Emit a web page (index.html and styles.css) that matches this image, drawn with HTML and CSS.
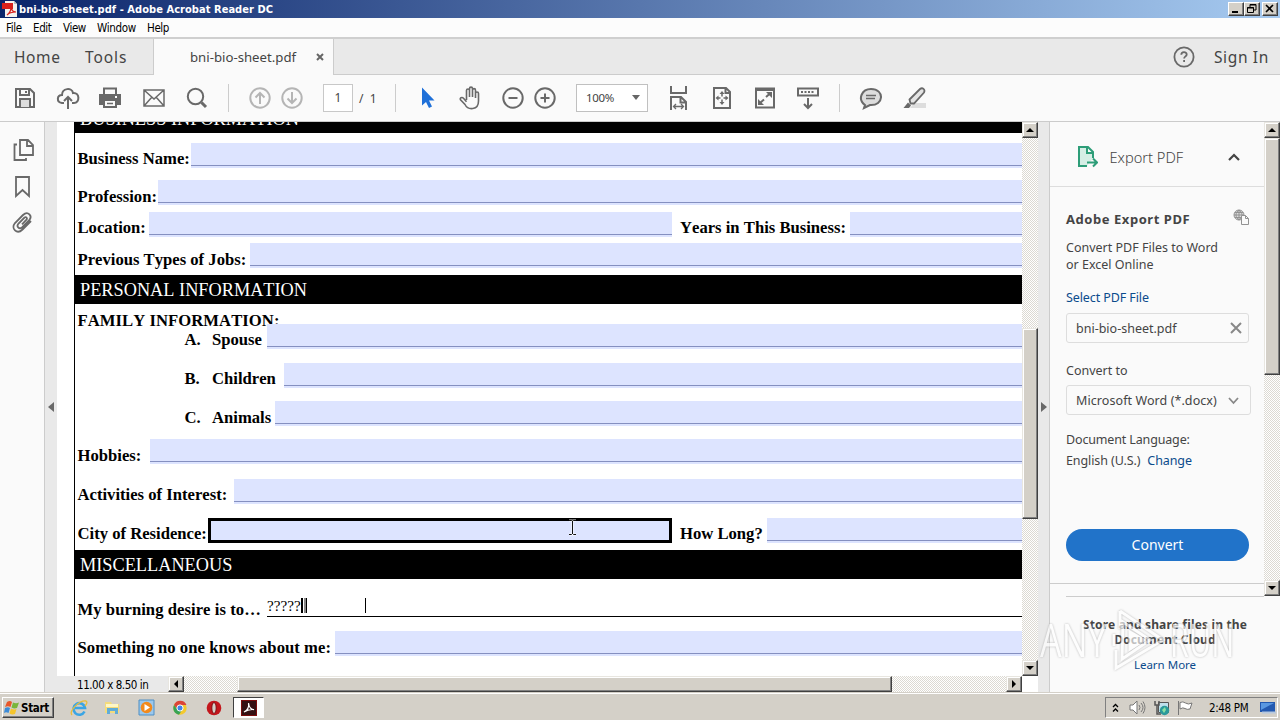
FILE: index.html
```html
<!DOCTYPE html>
<html lang="en">
<head>
<meta charset="utf-8">
<title>bni-bio-sheet.pdf - Adobe Acrobat Reader DC</title>
<link rel="stylesheet" href="styles.css">
</head>
<body>
<div class="screen">
  <header class="titlebar">
    <svg class="app-icon" width="16" height="16" viewBox="0 0 16 16"><path d="M3 0h9l3 3v13H3z" fill="#f4f1ee"/><path d="M12 0v3h3z" fill="#bbb"/><path d="M0 2h11v6H0z" fill="#d8201c"/><path d="M5 14c3-2 4-5 4-8 1 4 2 5 5 5-4 0-7 1-9 3z" fill="none" stroke="#d8201c" stroke-width="1.2"/></svg>
    <h1 class="title">bni-bio-sheet.pdf - Adobe Acrobat Reader DC</h1>
    <div class="winbtns">
      <span class="winbtn"><svg width="14" height="12"><path d="M3 9h6" stroke="#000" stroke-width="2"/></svg></span>
      <span class="winbtn"><svg width="14" height="12"><path d="M5 4V1.5h6V7H9M5 2h6M2.500 4.500h6v5h-6zM2 5h7" fill="none" stroke="#000"/></svg></span>
      <span class="winbtn close"><svg width="14" height="12"><path d="M3 2l7 7M10 2l-7 7" stroke="#000" stroke-width="1.600"/></svg></span>
    </div>
  </header>
  <nav class="menubar"><span class="m-file">File</span><span class="m-edit">Edit</span><span class="m-view">View</span><span class="m-window">Window</span><span class="m-help">Help</span></nav>
  <div class="tabs">
    <div class="tab-group"><span class="home">Home</span><span class="tools">Tools</span></div>
    <div class="tab-active"><span class="tab-name">bni-bio-sheet.pdf</span><svg width="8" height="8"><path d="M1 1l6 6M7 1L1 7" stroke="#666" stroke-width="2"/></svg></div>
    <div class="account">
      <svg width="22" height="22" viewBox="0 0 22 22" fill="none" stroke="#696969" stroke-width="1.800"><circle cx="11" cy="11" r="9.600"/><path d="M8.300 8.800c0-3.600 5.400-3.400 5.400-.4 0 2-2.600 2-2.600 4.200M11.100 14v2"/></svg>
      <span class="signin">Sign In</span>
    </div>
  </div>
  <div class="toolbar">
    <svg class="ic" viewBox="0 0 24 24"><path d="M3 3h14l4 4v14H3z"/><path d="M7 3v6h9V3M13 5v2"/><path d="M7 21v-8h10v8" fill="#ddd"/></svg>
    <svg class="ic" viewBox="0 0 24 24"><path d="M8 17H6c-6-1-5-8 0-8 0-7 10-8 11-2 7-1 7 10 1 10h-2M12 23V11M8 15l4-4 4 4"/></svg>
    <svg class="ic" viewBox="0 0 24 24"><path d="M2 9h20v9H2z" fill="#696969"/><path d="M6 8V2.500h12V8"/><path d="M6 14h12v7H6z" fill="#fafafa"/><path d="M9 17.500h6M3 11h2" stroke-width="1.500"/><path d="M17 11h2" stroke="#fff"/></svg>
    <svg class="ic thin" viewBox="0 0 24 24"><path d="M2 4h20v16H2zM2 4l10 9L22 4M2 20l8-9M22 20l-8-9"/></svg>
    <svg class="ic" viewBox="0 0 24 24"><circle cx="10.500" cy="10.500" r="7.700"/><path d="M16.500 16.500l4.500 4.500" stroke-width="3"/></svg>
    <i class="sep"></i>
    <svg class="ic pale" viewBox="0 0 24 24"><circle cx="12" cy="12" r="9.700"/><path d="M12 18V7M7.500 11.500L12 7l4.500 4.500"/></svg>
    <svg class="ic pale" viewBox="0 0 24 24"><circle cx="12" cy="12" r="9.700"/><path d="M12 6v11M7.500 12.500L12 17l4.500-4.500"/></svg>
    <span class="page-box">1</span><span class="page-total">/&nbsp; 1</span>
    <i class="sep"></i>
    <svg class="ic" viewBox="0 0 24 24"><path d="M7 1.500v18l4-3.500 3 6 3-1.500-3-6H19.500z" fill="#1f70d8" stroke="none"/></svg>
    <svg class="ic hand" viewBox="0 0 24 24"><path d="M8.500 14V4.500c0-2 3-2 3 0V11 2.800c0-2.200 3-2.200 3 0V11 4.300c0-2.200 3-2.200 3 0V12 7.500c0-2 3-2 3 0V15c0 9.500-10.500 9.500-13.500 3.500L2.500 13.800c-1-2 1.500-3 3-1.500l3 3.500"/></svg>
    <svg class="ic" viewBox="0 0 24 24"><circle cx="12" cy="12" r="9.700"/><path d="M7.500 12h9"/></svg>
    <svg class="ic" viewBox="0 0 24 24"><circle cx="12" cy="12" r="9.700"/><path d="M7.500 12h9M12 7.500v9"/></svg>
    <span class="zoom-box">100%<svg width="8" height="5"><path d="M0 0h8L4 5z" fill="#666"/></svg></span>
    <svg class="ic" viewBox="0 0 24 24"><path d="M4 0v7h15V0M4 24V11h10l5 5v8M13.500 11v5.500H19" /><path d="M7 20.500h9M9 18l-2.500 2.500L9 23M14 18l2.500 2.500L14 23" stroke-width="1.300"/></svg>
    <svg class="ic" viewBox="0 0 24 24"><path d="M4 2h12l4 4v16H4zM15.500 2v5H20"/><path d="M12 7v3.500M12 13.500V17M7 12h3.500M13.500 12H17" stroke-width="1.500"/><path d="M12 5l2.500 3h-5zM12 19l2.500-3h-5zM5.500 12l3-2.500v5zM18.500 12l-3-2.500v5z" fill="#696969" stroke="none"/></svg>
    <svg class="ic" viewBox="0 0 24 24"><path d="M3 2.500h18v19H3zM3 4h18"/><path d="M13 11l4-3.500M7 17l4-3.500"/><path d="M13 6h6v6zM5 13v6h6z" fill="#696969" stroke="none"/></svg>
    <svg class="ic" viewBox="0 0 24 24"><path d="M2 2.500h20v7H2z"/><path d="M5 6h14" stroke-dasharray="2 1.500"/><path d="M12 12v10M8 18l4 4 4-4"/></svg>
    <i class="sep"></i>
    <svg class="ic" viewBox="0 0 24 24"><path d="M6 19C-2 13 3 3 12 3c14 0 13 17-1 16l-6 3z" fill="#ddd"/><path d="M7 9.500h10M7 12.500h9" stroke-width="1.300"/></svg>
    <svg class="ic" viewBox="0 0 24 24"><path d="M12 17h12v5H8z" fill="#ddd" stroke="none"/><path d="M7.500 13.500L18 3c2.500-2 5.500.5 4 3.500L12 17.500H8.500z" fill="#e4e4e4" stroke-width="1.800"/><path d="M6 16.500l3 3-2 2.500H1.500z" fill="#696969" stroke="none"/></svg>
  </div>

  <main class="main">
    <aside class="rail">
      <svg width="24" height="24" viewBox="0 0 24 24"><path d="M9 2h8l5 5v10H9zM16 2v6h6M6 6.500H3.500V22H15v-2"/></svg>
      <svg width="24" height="24" viewBox="0 0 24 24"><path d="M5 3h13v19l-6.500-6L5 22z"/></svg>
      <svg width="24" height="24" viewBox="0 0 24 24"><path d="M20 11l-8.500 8.500c-5.500 5.500-12-1-7.500-6.500L12 5c5-4.500 10 1 6 5.500l-7 7c-3 2-6-1-3.500-4l6-6c2-1 3 1 2 2.200L11 14.300"/></svg>
    </aside>
    <div class="split left"><i class="tri-left"></i></div>
    <section class="viewer">
      <div class="doc">
        <div class="page">
          <div class="band first">BUSINESS INFORMATION</div>
          <div class="row r-name"><b>Business Name:</b><i class="field"></i></div>
          <div class="row down r-prof"><b>Profession:</b><i class="field"></i></div>
          <div class="row r-loc"><b>Location:</b><i class="field"></i><b class="second">Years in This Business:</b><i class="field"></i></div>
          <div class="row down r-prev"><b>Previous Types of Jobs:</b><i class="field"></i></div>
          <div class="band personal">PERSONAL INFORMATION</div>
          <div class="family">FAMILY INFORMATION:</div>
          <div class="row r-spouse"><b class="letter">A.</b><b class="item">Spouse</b><i class="field"></i></div>
          <div class="row r-child"><b class="letter">B.</b><b class="item">Children</b><i class="field"></i></div>
          <div class="row down r-anim"><b class="letter">C.</b><b class="item">Animals</b><i class="field"></i></div>
          <div class="row down r-hob"><b>Hobbies:</b><i class="field"></i></div>
          <div class="row r-act"><b>Activities of Interest:</b><i class="field"></i></div>
          <div class="row r-city"><b>City of Residence:</b><i class="field focus"></i><b class="second">How Long?</b><i class="field"></i></div>
          <div class="band misc">MISCELLANEOUS</div>
          <div class="row r-desire"><b>My burning desire is to…</b><span class="answer">?????<i class="bar thick"></i><i class="bar"></i><i class="bar far"></i></span></div>
          <div class="row down r-some"><b>Something no one knows about me:</b><i class="field"></i></div>
        </div>
      </div>
      <div class="vscroll doc-v">
        <span class="sbtn"><i class="up"></i></span><span class="thumb"></span><span class="sbtn end"><i class="down-arrow"></i></span>
      </div>
      <div class="statusbar">
        <span class="dims">11.00 x 8.50 in</span>
        <div class="hscroll"><span class="sbtn"><i class="lf"></i></span><span class="thumb"></span><span class="sbtn end"><i class="rt"></i></span></div>
      </div>
      <svg class="cursor" width="9" height="17" viewBox="0 0 9 17"><path d="M1 1.500h2.500l1 1 1-1H8M1 15.500h2.500l1-1 1 1H8M4.500 2v13" fill="none" stroke="#fff" stroke-opacity=".6" stroke-width="2.500"/><path d="M1 1.500h2.500l1 1 1-1H8M1 15.500h2.500l1-1 1 1H8M4.500 2v13" fill="none" stroke="#111"/></svg>
    </section>
    <div class="split right"><i class="tri-right"></i></div>
    <aside class="panel">
      <div class="panel-top">
        <div class="panel-body">
          <div class="export-head">
            <svg width="22" height="24" viewBox="0 0 22 24" fill="none" stroke="#2d9d78" stroke-width="2"><path d="M11 21H3V2h9l5 5v6M11 2v6h6" fill="#d5eee5"/><path d="M11 17.500h9M17 13.500l4 4-4 4"/></svg>
            <span>Export PDF</span>
            <svg width="12" height="8" class="chev"><path d="M1 7l5-5 5 5" fill="none" stroke="#444" stroke-width="2.200"/></svg>
          </div>
          <div class="export-body">
            <div class="heading"><b>Adobe Export PDF</b><svg width="17" height="17" viewBox="0 0 17 17" fill="none" stroke="#929292"><circle cx="6" cy="6" r="5" fill="#ddd"/><path d="M1 6h10M6 1v10M2 3.500h8M2 8.500h8M6 1C2 4 2 8 6 11M6 1c4 3 4 7 0 10"/><path d="M8.500 6.500h4l3 3v6h-7zM12.500 6.500v3h3" fill="#fafafa"/></svg></div>
            <p class="desc">Convert PDF Files to Word<br>or Excel Online</p>
            <a class="select">Select PDF File</a>
            <div class="box file"><span>bni-bio-sheet.pdf</span><svg width="12" height="12"><path d="M1 1l10 10M11 1L1 11" stroke="#888" stroke-width="2"/></svg></div>
            <div class="lbl-convert">Convert to</div>
            <div class="box format"><span>Microsoft Word (*.docx)</span><svg width="11" height="8"><path d="M1 1l4.500 5L10 1" fill="none" stroke="#888" stroke-width="1.800"/></svg></div>
            <div class="lbl-lang">Document Language:</div>
            <div class="lang"><span>English (U.S.)</span><a>Change</a></div>
            <div class="convert">Convert</div>
          </div>
        </div>
        <div class="vscroll panel-v"><span class="sbtn"><i class="up"></i></span><span class="thumb"></span><span class="sbtn end"><i class="down-arrow"></i></span></div>
      </div>
      <div class="cloud"><b class="c1">Store and share files in the</b><b class="c2">Document Cloud</b><a>Learn More</a></div>
      <div class="watermark"><span>ANY</span><svg width="60" height="64" viewBox="0 0 60 64" fill="none" stroke="#fff" stroke-width="3"><path d="M14 3v18M14 3l43 29L10 60V42M8 26v12M17 14l27 18-28 19z"/><path d="M24 24l14 8-14 9z" fill="#fff"/></svg><span>RUN</span></div>
    </aside>
  </main>

  <footer class="taskbar">
    <div class="start"><svg width="16" height="15" viewBox="0 0 16 15"><path d="M3 2q3-2 5 0L6.500 7Q4 5.500 1 7z" fill="#e8572b"/><path d="M9 2.500q3 1.500 6 0L13 8q-3 1-5.500-.5z" fill="#79b63a"/><path d="M1 8q3-1.500 5 0l-1.500 5Q2 11.500 0 13z" fill="#3b8bd8"/><path d="M7 8.500q3 1.500 5.500.5L11 14q-3 1-5.500-.5z" fill="#f5c52c"/></svg><b>Start</b></div>
    <svg class="t-ie" width="18" height="18" viewBox="0 0 18 18" fill="none"><path d="M14.500 12.500A5.800 5.800 0 1 1 15 9H5" stroke="#3aa5e4" stroke-width="2.600"/><path d="M2 16C-2 12 10 1 16 2c2 1 0 4-1 5" stroke="#e8bd3a" stroke-width="1.300"/></svg>
    <svg class="t-folder" width="17" height="17" viewBox="0 0 17 17"><path d="M1 3h6l1 2h7v9H1z" fill="#f3db7c"/><path d="M2 5h12v3H2z" fill="#fff7c5"/><path d="M3 15V9h11v6h-3v-3H6v3z" fill="#61acd8"/></svg>
    <svg class="t-media" width="17" height="17" viewBox="0 0 17 17"><path d="M1 1h15v15H1z" fill="#9bc8ed" stroke="#4e8fc4"/><circle cx="8.500" cy="8.500" r="5.800" fill="#f28a1d"/><path d="M6.500 5v7l5.500-3.500z" fill="#fff"/></svg>
    <svg class="t-chrome" width="16" height="16" viewBox="0 0 16 16"><circle cx="8" cy="8" r="6.700" fill="#f4c92e"/><path d="M2 5a6.700 6.700 0 0 1 12.500 0H8L5 9z" fill="#dc4437"/><path d="M2 5a6.700 6.700 0 0 0 5 9.700L10 10 5 9z" fill="#37a354"/><circle cx="8" cy="8" r="3.100" fill="#4384e8" stroke="#fff"/></svg>
    <svg class="t-opera" width="16" height="16" viewBox="0 0 16 16"><circle cx="8" cy="8" r="7.300" fill="#c3161c"/><ellipse cx="8" cy="8" rx="2.200" ry="5.500" fill="#d4d0c8" stroke="#7f0c10"/></svg>
    <div class="task-active"><svg width="16" height="16" viewBox="0 0 16 16"><path d="M0 0h16v16H0z" fill="#7b0c0c"/><path d="M1 1h14v14H1z" fill="#351012"/><path d="M3 12c4-2 5-6 4.500-9C8 7 10 10 13 9.500 9 9 6 10 3 12z" fill="none" stroke="#fff" stroke-width="1.200"/></svg></div>
    <div class="tray">
      <svg class="t-chev" width="7" height="10"><path d="M1 4l2.500-2.500L6 4M1 8.500L3.500 6 6 8.500" fill="none" stroke="#000" stroke-width="1.300"/></svg>
      <svg class="t-sound" width="17" height="15" viewBox="0 0 17 15" fill="none" stroke="#777"><path d="M1 5h3l4-4v13l-4-4H1z" fill="#fff"/><path d="M10 5q2 2.500 0 5M12 3q4 4.500 0 9M14 1.500q4 6 0 12"/></svg>
      <svg class="t-net" width="16" height="16" viewBox="0 0 16 16"><path d="M4.500 2.500h10v10h-10z" fill="#bfe0ec" stroke="#555"/><path d="M1 1v4h4V1M3 5v9h4" fill="none" stroke="#555" stroke-width="1.500"/><circle cx="10.500" cy="10.500" r="4.700" fill="#2b9a9b"/><path d="M8 10l3-3 1 3-2 3z" fill="#8be0a2"/></svg>
      <svg class="t-flag" width="16" height="16" viewBox="0 0 16 16"><path d="M1.500 1v14M3 2.500q3-1.500 5.500.5T15 3l-2 6q-3 1-5-.5t-5 .5z" fill="#fff" stroke="#777"/></svg>
      <span class="clock">2:48 PM</span>
      <svg class="t-desk" width="16" height="13" viewBox="0 0 16 13"><path d="M0 1h15v10H0z" fill="#2359b0"/><path d="M1 2h13L1 9z" fill="#5a98e1"/><path d="M2 11.500h14" stroke="#b6c8df" stroke-width="2"/></svg>
    </div>
  </footer>
</div>
</body>
</html>
```
FILE: styles.css
```css
* { box-sizing: border-box; }
body { margin: 0; background: #fafafa; font-family: "Noto Sans", sans-serif; color: #444; }
svg { display: block; flex: none; }
p, h1 { margin: 0; }
i { font-style: normal; }
span, b, a { white-space: nowrap; }
.screen { width: 1280px; height: 720px; display: grid; grid-template-rows: 18px 21px 36px 47px 570px 28px; overflow: hidden; }

.titlebar { display: flex; align-items: center; background: linear-gradient(90deg, #0a246a, #a6caf0); padding: 0 2px; }
.title { font: bold 11px/17px "DejaVu Sans Condensed", "DejaVu Sans", sans-serif; font-stretch: condensed; color: #fff; margin-left: 1px; letter-spacing: .05px; white-space: nowrap; }
.winbtns { display: flex; margin-left: auto; }
.winbtn { width: 16px; height: 14px; background: #d4d0c8; border: 1px solid; border-color: #fff #404040 #404040 #fff; box-shadow: inset -1px -1px #808080; }
.winbtn.close { margin-left: 2px; }

.menubar { display: flex; background: #fcfcfc; border-bottom: 2px solid #cfcfcf; padding-left: 6px; font: 11.500px/20px "DejaVu Sans Condensed", "DejaVu Sans", sans-serif; font-stretch: condensed; color: #000; letter-spacing: -.4px; }
.m-file { width: 27px; } .m-edit { width: 30px; } .m-view { width: 34px; } .m-window { width: 50px; letter-spacing: -.3px; }

.tabs { display: flex; background: #fafafa; }
.tab-group { width: 154px; background: #e9e9e9; border-right: 1px solid #ccc; border-bottom: 1px solid #ccc; padding-left: 14px; display: flex; font-size: 15.500px; line-height: 36px; letter-spacing: .6px; }
.home { width: 71px; }
.tools { letter-spacing: .9px; }
.tab-active { width: 179px; padding-left: 36px; display: flex; align-items: center; gap: 20px; font-size: 13.200px; }
.account { flex: 1; background: #e9e9e9; border-left: 1px solid #ccc; border-bottom: 1px solid #ccc; display: flex; align-items: center; justify-content: flex-end; padding-right: 11px; gap: 19px; font-size: 15.500px; letter-spacing: .65px; }

.toolbar { display: grid; grid-template-columns: 43px 42px 44px 43px 43px 20px 32px 43px 36px 36px 20px 43px 43px 32px 43px 91px 43px 43px 43px 43px 20px 43px 24px; padding-left: 13px; align-items: center; border-bottom: 1px solid #cbcbcb; font-size: 12px; }
.ic { width: 24px; height: 24px; fill: none; stroke: #696969; stroke-width: 2; }
.ic.thin { stroke-width: 1.500; }
.ic.hand { stroke-width: 1.600; }
.ic.pale { stroke: #b5b5b5; }
.sep { width: 1px; height: 28px; background: #ccc; }
.page-box { width: 30px; height: 28px; border: 1px solid #c8c8c8; background: #fff; line-height: 26px; text-align: center; }
.zoom-box { width: 72px; height: 28px; border: 1px solid #c0c0c0; background: #fff; display: flex; align-items: center; justify-content: space-between; padding: 0 7px 1px 9px; font-size: 11.500px; letter-spacing: -.3px; }

.main { display: grid; grid-template-columns: 44px 13px 981px 12px 230px; min-height: 0; }
.rail { background: #fafafa; padding: 16px 0 0 11px; display: flex; flex-direction: column; gap: 12px; }
.rail svg { fill: none; stroke: #696969; stroke-width: 1.800; }
.split { background: #e9e9e9; display: flex; align-items: center; }
.split.left { border-left: 1px solid #ccc; padding-left: 3px; }
.split.right { border-right: 1px solid #ccc; padding-left: 3px; }
.tri-left { border: 5px solid transparent; border-left: 0; border-right: 6px solid #696969; }
.tri-right { border: 5px solid transparent; border-right: 0; border-left: 6px solid #696969; }

.viewer { display: grid; grid-template: 554px 16px / 965px 16px; position: relative; background: #fff; }
.doc { overflow: hidden; padding-left: 17px; font-family: "Liberation Serif", serif; color: #000; font-kerning: none; }
.page { height: 554px; border-left: 1px solid #000; overflow: hidden; }
.band { height: 29px; background: #000; color: #fff; padding-left: 5px; font-size: 18.300px; line-height: 30px; white-space: nowrap; }
.band.first { height: 11px; display: flex; align-items: flex-end; overflow: hidden; line-height: 28px; }
.row { display: flex; height: 24px; font-size: 16.650px; line-height: 31px; padding-left: 2.500px; }
.row > b { flex: none; height: 24px; }
.row.down { line-height: 33px; }
.field { flex: 1; height: 25px; background: #dde4ff; border-bottom: 2px solid #dde4ff; box-shadow: inset 0 -1px #8590c0; }
.second { margin-left: 8px; }
.r-name { margin-top: 10px; } .r-name > b { width: 113.500px; }
.r-prof { margin-top: 13px; } .r-prof > b { width: 80.500px; }
.r-loc { margin-top: 8px; } .r-loc > b:first-child { width: 71.500px; } .r-loc .field:nth-child(2) { flex: 0 0 523px; } .r-loc > .second { width: 170px; }
.r-prev { margin-top: 7px; } .r-prev > b { width: 172.500px; }
.band.personal { margin-top: 8px; }
.family { height: 20px; line-height: 33px; padding-left: 2.500px; font-size: 16.650px; font-weight: bold; letter-spacing: .05px; }
.row > .letter { width: 27.500px; margin-left: 107px; }
.r-spouse > .item { width: 55px; }
.r-child { margin-top: 15px; } .r-child > .item { width: 72px; }
.r-anim { margin-top: 14px; } .r-anim > .item { width: 63px; }
.r-hob { margin-top: 14px; } .r-hob > b { width: 72.500px; }
.r-act { margin-top: 16px; } .r-act > b { width: 156.500px; }
.r-city { margin-top: 15px; } .r-city > b:first-child { width: 130.500px; } .r-city > .second { width: 87px; }
.row > .focus { flex: 0 0 464px; border: 3px solid #000; box-shadow: none; }
.band.misc { margin-top: 8px; }
.r-desire { margin-top: 15px; } .r-desire > b { width: 189.500px; letter-spacing: .05px; }
.answer { flex: 1; height: 23px; border-bottom: 1px solid #000; display: flex; line-height: 25px; font-size: 15.200px; align-items: center; padding-top: 1px; }
.bar { width: 1px; height: 15px; background: #000; margin-left: 2px; }
.bar.thick { width: 2px; margin-left: 0; box-shadow: 3px 0 #888; } .bar + .bar { margin-left: 3px; } .bar + .bar.far { margin-left: 58px; }
.r-some { margin-top: 13px; } .r-some > b { width: 257.500px; letter-spacing: .05px; }
.cursor { position: absolute; left: 511px; top: 397px; }

.vscroll, .hscroll { display: flex; background: repeating-conic-gradient(#fff 0 25%, #dcd9d2 0 50%) 0 0 / 2px 2px; }
.vscroll { flex-direction: column; }
.sbtn { width: 16px; height: 16px; flex: none; background: #d4d0c8; border: 1px solid; border-color: #e8e6e0 #404040 #404040 #e8e6e0; box-shadow: inset -1px -1px #808080, inset 1px 1px #fff; display: grid; place-items: center; }
.end { margin-top: auto; }
.hscroll .end { margin: 0 0 0 auto; }
.thumb { background: #d4d0c8; border: 1px solid; border-color: #e8e6e0 #404040 #404040 #e8e6e0; box-shadow: inset -1px -1px #808080, inset 1px 1px #fff; }
.up { border: 4px solid transparent; border-top: 0; border-bottom-color: #000; }
.down-arrow { border: 4px solid transparent; border-bottom: 0; border-top-color: #000; }
.lf { border: 4px solid transparent; border-left: 0; border-right-color: #000; }
.rt { border: 4px solid transparent; border-right: 0; border-left-color: #000; }
.doc-v .thumb { margin-top: 190px; height: 191px; }
.panel-v .thumb { height: 237px; }
.hscroll .thumb { margin-left: 53px; width: 655px; }
.statusbar { display: flex; }
.dims { width: 111px; background: #e9e9e9; padding-left: 20px; font: 11.500px/18px "DejaVu Sans Condensed", "DejaVu Sans", sans-serif; font-stretch: condensed; letter-spacing: -.45px; color: #000; }
.hscroll { flex: 1; }

.panel { position: relative; background: #fafafa; font-size: 12.500px; }
.panel a { color: #0b4b8c; }
.panel-top { display: grid; grid-template-columns: 214px 16px; height: 474px; }
.panel-body { border-bottom: 1px solid #ccc; height: 462px; }
.export-head { height: 65px; margin-bottom: 23px; border-bottom: 1px solid #ddd; display: flex; align-items: center; padding: 5px 24px 0 26px; font-size: 14.600px; font-weight: 300; }
.export-head span { margin-left: 11.500px; }
.chev { margin-left: auto; }
.export-body { padding: 0 14px 0 16px; }
.heading { display: flex; justify-content: space-between; height: 18px; line-height: 18px; font-size: 13px; letter-spacing: .55px; }
.heading svg { margin-top: -1px; }
.desc { margin-top: 11px; line-height: 17px; }
.select { display: block; margin-top: 16px; line-height: 17px; letter-spacing: -.1px; }
.box { border: 1px solid #ddd; border-radius: 3px; height: 30px; display: flex; align-items: center; justify-content: space-between; padding: 0 6px 0 9px; }
.file { width: 183px; margin-top: 7px; }
.lbl-convert { margin-top: 19px; line-height: 18px; }
.format { width: 185px; margin-top: 5px; padding-right: 11px; padding-top: 1px; letter-spacing: .08px; }
.lbl-lang { margin-top: 16px; line-height: 18px; letter-spacing: -.15px; }
.lang { display: flex; gap: 7px; margin-top: 3px; line-height: 18px; letter-spacing: -.1px; }
.convert { width: 183px; height: 32px; margin-top: 59px; border-radius: 16px; background: #2173c9; color: #fff; text-align: center; font-size: 14px; line-height: 31px; }
.cloud { margin: 0 0 0 16px; height: 95px; border-top: 1px solid #ccc; width: 198px; display: flex; flex-direction: column; align-items: center; padding-top: 20px; font-size: 12px; line-height: 15px; letter-spacing: .16px; }
.cloud a { margin-top: 10px; font-size: 11.500px; letter-spacing: 0; }
.watermark { position: absolute; left: -10px; top: 486px; display: flex; align-items: center; opacity: .66; font: 45px/64px "Open Sans", sans-serif; color: #fff; filter: drop-shadow(0 0 1px #999); }
.watermark span { display: block; width: 66px; transform: scaleX(.76); transform-origin: 0 50%; }
.watermark svg + span { margin-left: 4px; transform: scaleX(.68); }

.taskbar { background: #d4d0c8; border-top: 1px solid #d4d0c8; box-shadow: inset 0 1px #fff; display: flex; align-items: center; padding: 2px 2px 0; }
.start { width: 52px; height: 21px; border: 1px solid; border-color: #fff #404040 #404040 #fff; box-shadow: inset -1px -1px #808080; display: flex; align-items: center; gap: 1px; font: bold 11.500px "DejaVu Sans Condensed", "DejaVu Sans", sans-serif; font-stretch: condensed; color: #000; padding-left: 1px; letter-spacing: -.3px; }
.t-ie { margin-left: 16px; } .t-folder { margin-left: 16px; } .t-media { margin-left: 17px; } .t-chrome { margin-left: 17px; } .t-opera { margin-left: 18px; }
.task-active { width: 31px; height: 21px; margin-left: 11px; background: #fff; border: 1px solid; border-color: #404040 #fff #fff #404040; display: grid; place-items: center; }
.tray { width: 173px; height: 21px; margin-left: auto; border: 1px solid; border-color: #808080 #fff #fff #808080; display: flex; align-items: center; padding-left: 6px; }
.t-sound { margin-left: 10px; } .t-net { margin-left: 8px; } .t-flag { margin-left: 7px; }
.clock { width: 51px; margin-left: 16px; font: 11.500px "DejaVu Sans Condensed", "DejaVu Sans", sans-serif; font-stretch: condensed; color: #000; letter-spacing: -.35px; }
```
